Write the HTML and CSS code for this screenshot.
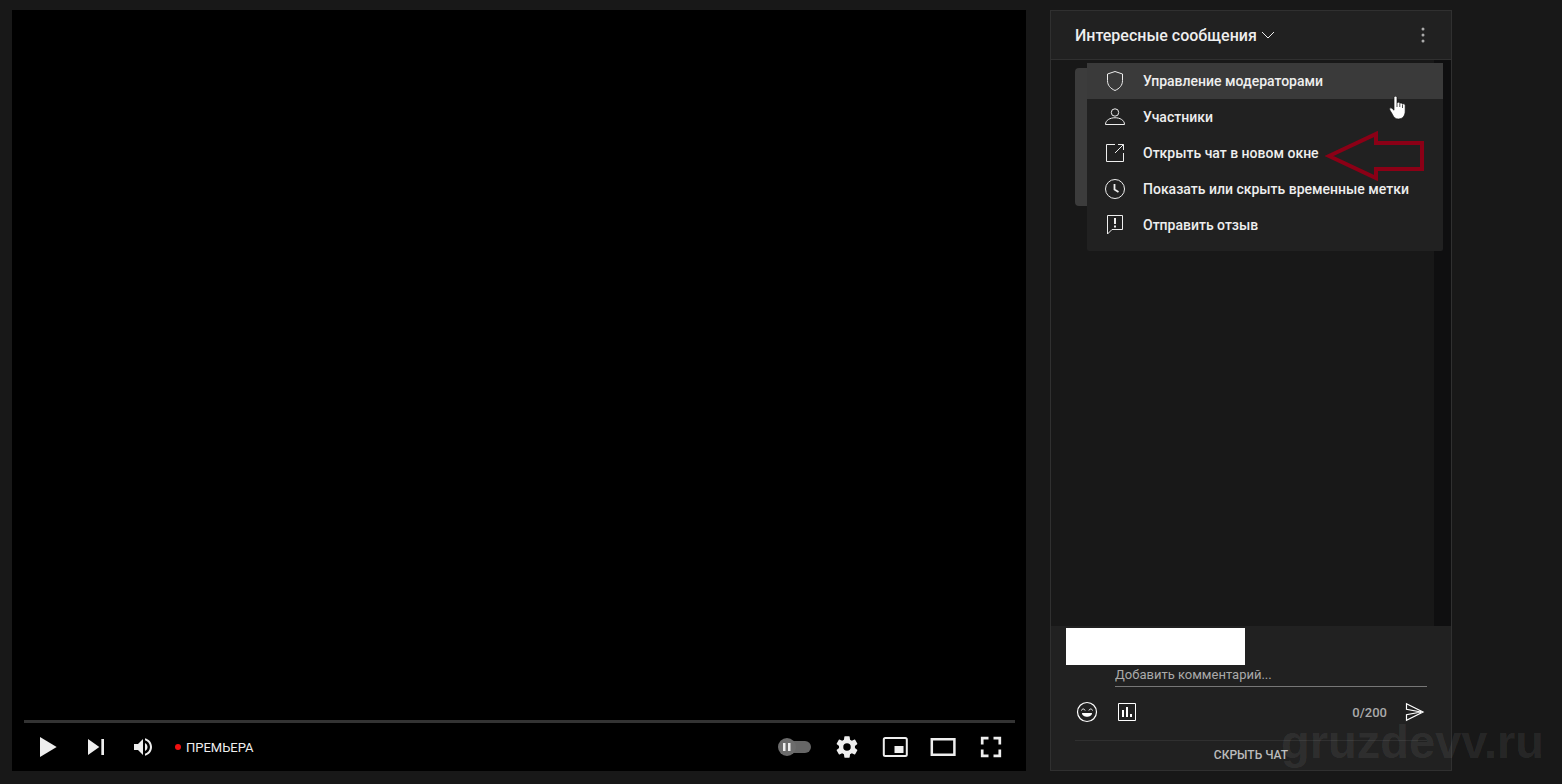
FILE: index.html
```
<!DOCTYPE html>
<html lang="ru">
<head>
    <meta charset="UTF-8">
    <meta name="viewport" content="width=device-width, initial-scale=1.0">
    <title>Премьера</title>
    <link rel="stylesheet" href="styles.css">
</head>
<body>
    <main>
        <!-- Player -->
        <section class="player">
            <div class="progress"></div>
            <div class="controls">
                <button class="control-btn" aria-label="Смотреть">
                    <svg width="48" height="48" viewBox="0 0 36 36"><path d="M12 10.500 24.500 18 12 25.500z"/></svg>
                </button>
                <button class="control-btn" aria-label="Следующее видео">
                    <svg width="48" height="48" viewBox="0 0 36 36"><path d="M12 24l8.500-6L12 12zM22 12v12h2V12z"/></svg>
                </button>
                <button class="control-btn" aria-label="Звук">
                    <svg width="36" height="36" viewBox="0 0 36 36"><path d="M8 21h4l5 5V10l-5 5H8zM19 14v8c1.480-.680 2.500-2.230 2.500-4s-1.020-3.260-2.500-4zM19 11.290c2.890.860 5 3.540 5 6.710s-2.110 5.850-5 6.710v2.060c4.010-.910 7-4.490 7-8.770s-2.990-7.860-7-8.770z"/></svg>
                </button>
                <span class="premiere">ПРЕМЬЕРА</span>
                <button class="control-btn autoplay" aria-label="Автовоспроизведение">
                    <svg width="48" height="48" viewBox="0 0 48 48">
                        <rect x="11" y="18" width="25" height="12" rx="6" fill="#666"/>
                        <circle cx="12" cy="24" r="9" fill="#6c6c6c"/>
                        <path d="M8 20h2.500v8H8zM13 20h2.500v8H13z" fill="#eee"/>
                    </svg>
                </button>
                <button class="control-btn" aria-label="Настройки">
                    <svg width="48" height="48" viewBox="0 0 36 36"><path d="m23.940 18.780c.030-.250.050-.510.050-.780s-.020-.520-.050-.780l1.680-1.320c.150-.120.190-.330.090-.510l-1.600-2.760c-.090-.170-.310-.240-.480-.170l-1.990.800c-.410-.320-.860-.580-1.350-.780l-.300-2.120c-.020-.190-.190-.330-.390-.330h-3.200c-.200 0-.360.140-.390.330l-.300 2.120c-.480.200-.930.470-1.350.780l-1.990-.800c-.180-.070-.390 0-.480.170l-1.600 2.760c-.100.170-.050.390.090.510l1.680 1.320c-.030.250-.050.520-.050.780s.020.520.050.780l-1.680 1.320c-.150.120-.190.330-.090.510l1.600 2.760c.090.170.310.240.480.170l1.990-.800c.410.320.860.580 1.350.780l.300 2.120c.020.190.190.330.390.330h3.200c.200 0 .360-.140.390-.330l.300-2.120c.480-.200.930-.470 1.350-.780l1.990.800c.180.070.390 0 .480-.170l1.600-2.760c.090-.170.050-.390-.090-.510zM18 20.800a2.800 2.800 0 1 1 0-5.600 2.800 2.800 0 0 1 0 5.600z"/></svg>
                </button>
                <button class="control-btn" aria-label="Мини-проигрыватель">
                    <svg width="48" height="48" viewBox="0 0 48 48"><rect x="12.800" y="15" width="23" height="18" rx="1.500" fill="none" stroke="#eee" stroke-width="2"/><path d="M23.500 23h9v7h-9z"/></svg>
                </button>
                <button class="control-btn" aria-label="Широкий экран">
                    <svg width="48" height="48" viewBox="0 0 48 48"><path d="M12.800 16.200h22.600v15.600H12.800z" fill="none" stroke="#eee" stroke-width="2.500"/></svg>
                </button>
                <button class="control-btn" aria-label="Во весь экран">
                    <svg width="48" height="48" viewBox="0 0 48 48"><path d="M15.200 21.500v-6.300h6.300M26.500 15.200h6.300v6.300M32.800 26.500v6.300h-6.300M21.500 32.800h-6.300v-6.300" fill="none" stroke="#eee" stroke-width="2.700"/></svg>
                </button>
            </div>
        </section>

        <!-- Chat -->
        <section class="chat">
            <header class="chat-header">
                <button class="chat-title">
                    Интересные сообщения
                    <svg width="14" height="14" viewBox="0 0 14 14"><path d="M1 4l6 6 6-6" fill="none" stroke="#eee"/></svg>
                </button>
                <button class="icon-btn" aria-label="Ещё">
                    <svg width="24" height="24" viewBox="0 0 24 24" fill="#aaa"><circle cx="12" cy="6" r="1.500"/><circle cx="12" cy="12" r="1.500"/><circle cx="12" cy="18" r="1.500"/></svg>
                </button>
            </header>

            <div class="chat-messages">
                <div class="message-list">
                    <div class="notice"></div>
                </div>
                <div class="scroll-track"></div>
            </div>

            <div class="chat-footer">
                <div class="author"></div>
                <input class="comment" type="text" aria-label="Комментарий" placeholder="Добавить комментарий...">
                <div class="tools">
                    <button class="icon-btn" aria-label="Смайлики">
                        <svg width="24" height="24" viewBox="0 0 24 24">
                            <circle cx="12" cy="12" r="9.500" fill="none" stroke="#fff" stroke-width="1.200"/>
                            <path d="M6.500 10.500c.500-2 3-2 3.600 0M13.900 10.500c.600-2 3.100-2 3.600 0" fill="none" stroke="#fff"/>
                            <path d="M7 13h10c0 5-10 5-10 0z" fill="#fff"/>
                        </svg>
                    </button>
                    <button class="icon-btn" aria-label="Опрос">
                        <svg width="24" height="24" viewBox="0 0 24 24"><path d="M3.500 3.500h17v17h-17z" fill="none" stroke="#fff"/><path d="M7 10h2v7H7zM11 7h2v10h-2zM15 14h2v3h-2z" fill="#fff"/></svg>
                    </button>
                    <span class="counter">0/200</span>
                    <button class="icon-btn" aria-label="Отправить">
                        <svg width="24" height="24" viewBox="0 0 24 24"><path d="M3.500 3.800 20 12 3.500 20.200v-5.500L18 12 3.500 9.300z" fill="none" stroke="#fff" stroke-width="1.200"/></svg>
                    </button>
                </div>
                <button class="hide-chat">СКРЫТЬ ЧАТ</button>
            </div>

            <!-- Options menu -->
            <div class="menu">
                <button class="menu-item active">
                    <svg width="24" height="24" viewBox="0 0 24 24"><path d="M12 2.500 19.500 5v6.500c0 5-3 8-7.500 10-4.500-2-7.500-5-7.500-10V5z"/></svg>
                    Управление модераторами
                </button>
                <button class="menu-item">
                    <svg width="24" height="24" viewBox="0 0 24 24"><circle cx="12" cy="7.500" r="3.700"/><path d="M2.500 19.500c0-9 19-9 19 0z"/></svg>
                    Участники
                </button>
                <button class="menu-item">
                    <svg width="24" height="24" viewBox="0 0 24 24"><path d="M12 3.500H3.500v17h17V12M15 3.500h5.500V9M20.500 3.500 12 12"/></svg>
                    Открыть чат в новом окне
                </button>
                <button class="menu-item">
                    <svg width="24" height="24" viewBox="0 0 24 24"><circle cx="12" cy="12" r="9.500"/><path d="M11.500 7v5.500l4 2.500" stroke-width="1.800"/></svg>
                    Показать или скрыть временные метки
                </button>
                <button class="menu-item">
                    <svg width="24" height="24" viewBox="0 0 24 24"><path d="M4.500 21V2.500h15v14H9z"/><path d="M12 5v6M12 12.500v2" stroke-width="2"/></svg>
                    Отправить отзыв
                </button>
                <svg class="arrow" width="100" height="52" viewBox="0 0 100 52"><path d="M4 26 51 4v9h46v26H51v9z" fill="none" stroke="#8b0016" stroke-width="4"/></svg>
                <svg class="pointer" width="18" height="24" viewBox="0 0 18 24"><path d="M5 1.500C5-.3 8-.3 8 1.500V7c.500-1.300 2.700-1 2.800.600.600-1.100 2.500-.8 2.700.700.700-1 2.700-.6 2.700 1.200V15c0 4.500-2.500 8-6.700 8-3.500 0-4.800-2-6-4.500L.8 14c-.9-1.800 1-2.900 2.300-1.600L5 14.200z" fill="#fff" stroke="#111" stroke-width=".7"/><path d="M8 7v4M10.800 8v3M13.500 9v3" stroke="#222" stroke-width=".8"/></svg>
            </div>
        </section>
    </main>

    <div class="watermark">gruzdevv.ru</div>
</body>
</html>
```
FILE: styles.css
```
/* General Styles */
* {
    box-sizing: border-box;
}

body {
    margin: 0;
    min-height: 100vh;
    display: flex;
    background: #181818;
    color: #eee;
    font-family: Roboto, sans-serif;
    font-size: 14px;
}

button {
    margin: 0;
    padding: 0;
    border: none;
    background: none;
    color: inherit;
    font: inherit;
    cursor: pointer;
}

svg {
    display: block;
    flex-shrink: 0;
}

main {
    flex: 1;
    display: flex;
    gap: 24px;
    padding: 10px 110px 13px 12px;
}

/* Player */
.player {
    flex: 1;
    display: flex;
    flex-direction: column;
    justify-content: flex-end;
    padding: 0 11px 0 12px;
    background: #000;
}

.progress {
    height: 3px;
    background: #333;
}

.controls {
    display: flex;
    align-items: center;
    height: 48px;
}

.control-btn {
    width: 48px;
    height: 48px;
    display: flex;
    align-items: center;
    justify-content: center;
    fill: #eee;
}

.premiere {
    display: flex;
    align-items: center;
    gap: 5px;
    margin-left: 7px;
    font-size: 13px;
}

.premiere::before {
    content: "";
    width: 6px;
    height: 6px;
    border-radius: 50%;
    background: #f00f0f;
}

.autoplay {
    margin-left: auto;
}

/* Chat */
.chat {
    position: relative;
    width: 402px;
    display: flex;
    flex-direction: column;
    border: 1px solid #303030;
}

.chat-header {
    display: flex;
    align-items: center;
    justify-content: space-between;
    height: 49px;
    padding: 0 16px 0 24px;
    background: #212121;
    border-bottom: 1px solid #303030;
}

.chat-title {
    display: flex;
    align-items: center;
    gap: 4px;
    font-size: 16px;
    font-weight: 500;
}

.chat-messages {
    flex: 1;
    display: flex;
}

.message-list {
    flex: 1;
    padding: 8px 24px;
}

.notice {
    height: 138px;
    border-radius: 4px;
    background: #3c3c3c;
}

.scroll-track {
    width: 17px;
    background: #0f0f10;
}

.chat-footer {
    display: flex;
    flex-direction: column;
    padding: 2px 24px 0;
    background: #212121;
}

.author {
    width: 179px;
    height: 37px;
    margin-left: -9px;
    background: #fff;
}

.comment {
    height: 22px;
    margin-left: 40px;
    padding: 0 0 2px;
    border: none;
    border-bottom: 1px solid #777;
    outline: none;
    background: none;
    color: #eee;
    font: inherit;
    font-size: 13px;
}

.comment::placeholder {
    color: #aaa;
}

.tools {
    display: flex;
    align-items: center;
    gap: 16px;
    height: 53px;
    padding-bottom: 3px;
}

.counter {
    margin-left: auto;
    color: #aaa;
    font-size: 13px;
    font-weight: 500;
}

.hide-chat {
    height: 30px;
    padding-bottom: 2px;
    border-top: 1px solid #303030;
    color: #bbb;
    font-size: 12px;
    font-weight: 500;
}

/* Options menu */
.menu {
    position: absolute;
    top: 52px;
    right: 8px;
    width: 356px;
    padding-bottom: 8px;
    border-radius: 2px;
    background: #212121;
}

.menu-item {
    width: 100%;
    height: 36px;
    display: flex;
    align-items: center;
    gap: 16px;
    padding: 0 16px;
    font-weight: 500;
    text-align: left;
}

.menu-item svg {
    fill: none;
    stroke: #eee;
}

.menu-item.active {
    background: #3a3a3a;
}

.arrow {
    position: absolute;
    top: 67px;
    right: 18px;
}

.pointer {
    position: absolute;
    top: 33px;
    right: 36px;
}

.watermark {
    position: absolute;
    right: 18px;
    bottom: 16px;
    color: rgba(255, 255, 255, 0.08);
    font-family: "Liberation Sans", Arial, sans-serif;
    font-size: 47px;
    font-weight: 700;
    line-height: 52px;
    pointer-events: none;
}
```
